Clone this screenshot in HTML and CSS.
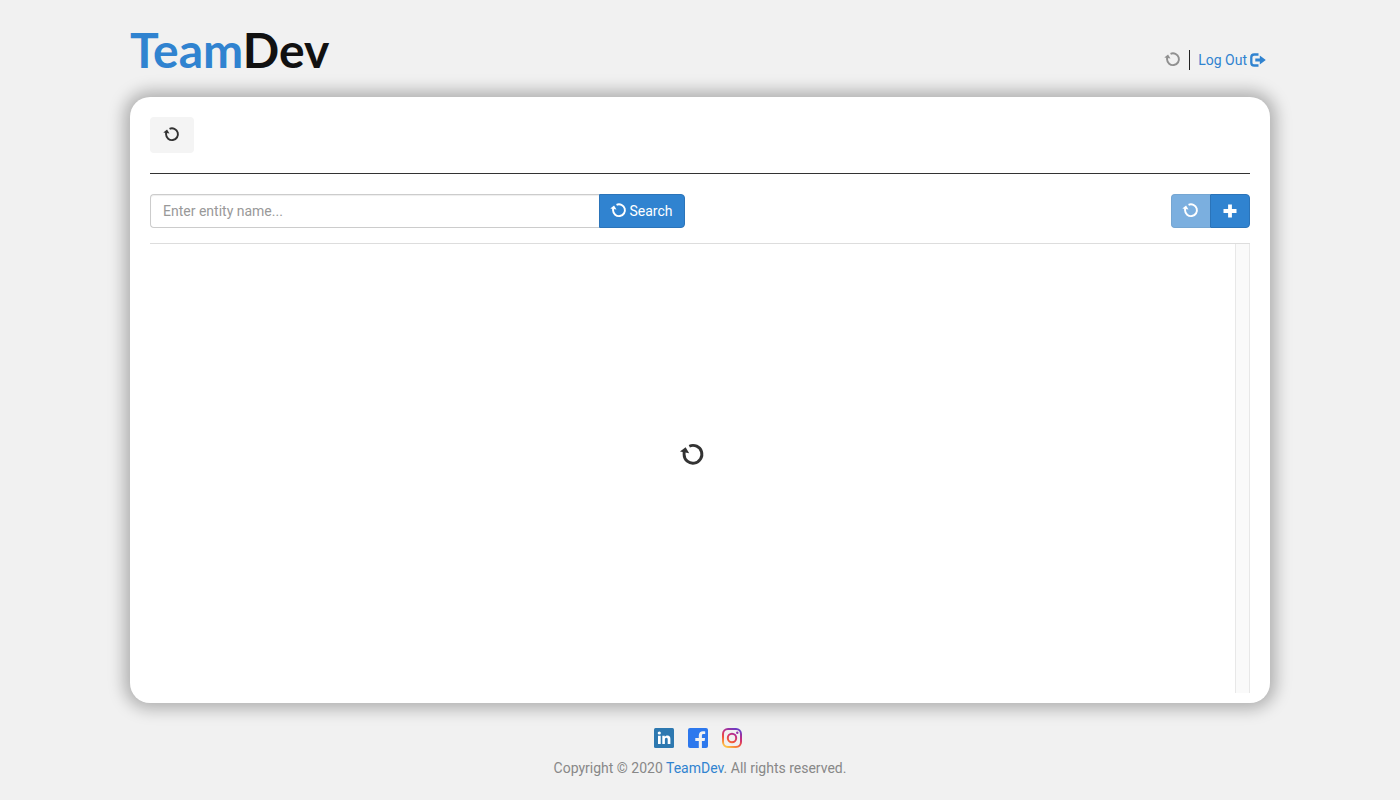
FILE: index.html
```html
<!DOCTYPE html>
<html lang="en">
<head>
<meta charset="utf-8">
<meta name="viewport" content="width=device-width, initial-scale=1">
<title>TeamDev</title>
<link rel="stylesheet" href="styles.css">
</head>
<body>
<svg class="sprite" aria-hidden="true">
  <symbol id="refresh" viewBox="0 0 24 24" overflow="visible">
    <path d="M8.300 4.200A8.900 8.900 0 1 1 3.100 12.400V9.500" fill="none" stroke="currentColor" stroke-width="2.900"/>
    <path d="M-1 9.600 4.600 5.200 8.200 11.200Z" fill="currentColor"/>
  </symbol>
</svg>
<div class="page">
  <header class="header">
    <a class="logo" href="#">Team<span class="logo-dark">Dev</span></a>
    <nav class="account">
      <svg class="icon muted"><use href="#refresh"/></svg>
      <span class="divider"></span>
      <a class="logout" href="#">Log Out
        <svg class="exit" viewBox="0 0 16 14"><path d="M8.500 1.500H4.200Q1.300 1.500 1.300 4.300V9.700Q1.300 12.500 4.200 12.500H8.500" fill="none" stroke="currentColor" stroke-width="2.300"/><path d="M5.300 5.500H9.800V2.400L15.800 7 9.800 11.600V8.500H5.300Z" fill="currentColor"/></svg>
      </a>
    </nav>
  </header>
  <main class="card">
    <div class="tabs">
      <button class="tab" type="button" aria-label="Loading"><svg class="icon"><use href="#refresh"/></svg></button>
    </div>
    <div class="toolbar">
      <form class="search">
        <input class="search-input" type="text" placeholder="Enter entity name..." aria-label="Entity name">
        <button class="button search-button" type="button"><svg class="icon"><use href="#refresh"/></svg>Search</button>
      </form>
      <div class="actions">
        <button class="button action-refresh" type="button" aria-label="Refresh" disabled><svg class="icon"><use href="#refresh"/></svg></button>
        <button class="button action-add" type="button" aria-label="Add"><svg class="plus" viewBox="0 0 14 14"><path d="M7 .5V13.5M.5 7H13.5" stroke="currentColor" stroke-width="3.800"/></svg></button>
      </div>
    </div>
    <div class="list">
      <div class="loading"><svg class="icon-large"><use href="#refresh"/></svg></div>
      <div class="track"></div>
    </div>
  </main>
  <footer class="footer">
    <div class="social">
      <a href="#" aria-label="LinkedIn"><svg viewBox="0 0 20 20"><rect width="20" height="20" rx="1.5" fill="#2d78b0"/><circle cx="5.3" cy="5" r="1.6" fill="#fff"/><path d="M4 7.7h2.7V16H4zM8.3 7.7h2.5v1.2c.5-.8 1.4-1.4 2.6-1.4 2.2 0 3 1.4 3 3.6V16h-2.700v-4.300c0-1.200-.3-2-1.300-2-1.100 0-1.500.8-1.500 2V16H8.300z" fill="#fff"/></svg></a>
      <a href="#" aria-label="Facebook"><svg viewBox="0 0 20 20"><rect width="20" height="20" rx="2" fill="#2d78ed"/><path d="M10.800 20v-7H7.300v-3h3.500V7.600c0-2.900 1.700-4.300 4.200-4.300 1 0 1.700.1 2.200.2v2.600h-1.700c-1.300 0-1.600.7-1.600 1.700V10h3.200l-.5 3h-2.700v7z" fill="#f1f1f1"/></svg></a>
      <a href="#" aria-label="Instagram"><svg viewBox="0 0 20 20"><defs><linearGradient id="insta" x1=".25" y1="1" x2=".75" y2="0"><stop offset="0" stop-color="#fdbf45"/><stop offset=".35" stop-color="#f0523b"/><stop offset=".65" stop-color="#c42d83"/><stop offset="1" stop-color="#6b3bc4"/></linearGradient></defs><path fill="none" stroke="url(#insta)" stroke-width="2" d="M6 1h8a5 5 0 0 1 5 5v8a5 5 0 0 1-5 5H6a5 5 0 0 1-5-5V6a5 5 0 0 1 5-5zM10 5.800a4.200 4.200 0 1 1 0 8.400 4.200 4.200 0 0 1 0-8.400z"/><circle cx="15.300" cy="4.700" r="1.200" fill="#9735a8"/></svg></a>
    </div>
    <p class="copyright">Copyright © 2020 <a href="#">TeamDev</a>. All rights reserved.</p>
  </footer>
</div>
</body>
</html>
```
FILE: styles.css
```css
* { box-sizing: border-box; }
body {
  margin: 0;
  background: #f1f1f1;
  color: #333;
  font: 14px/20px Roboto, "Liberation Sans", sans-serif;
}
a { color: #3083d0; text-decoration: none; }
button, input { font: inherit; margin: 0; }
svg { display: block; flex: none; }
.sprite { position: absolute; width: 0; height: 0; }
.page {
  display: flex;
  flex-direction: column;
  min-height: 100vh;
  max-width: 1140px;
  margin: 0 auto;
}
.header {
  display: flex;
  justify-content: space-between;
  height: 97px;
  padding-right: 4px;
}
.logo {
  padding-top: 20px;
  font: 700 48px/60px Lato, "Open Sans", sans-serif;
}
.logo-dark { color: #111; }
.account {
  display: flex;
  align-items: center;
  height: 20px;
  margin-top: 50px;
}
.icon { width: 16px; height: 16px; margin-bottom: 2px; overflow: visible; }
.muted { color: #909090; }
.divider { width: 1px; height: 20px; margin: 0 8px; background: #222; }
.logout { display: flex; align-items: center; gap: 3px; }
.exit { width: 16px; height: 14px; }
.card {
  display: flex;
  flex: 1;
  flex-direction: column;
  padding: 20px 20px 10px;
  border-radius: 20px;
  background: #fff;
  box-shadow: 0 0 16px 6px rgba(0, 0, 0, .27);
}
.tabs { padding-bottom: 20px; border-bottom: 1px solid #333; }
.tab {
  display: grid;
  place-items: center;
  width: 44px;
  height: 36px;
  padding: 0;
  border: 0;
  border-radius: 4px;
  background: #f4f4f4;
  color: #333;
}
.toolbar {
  display: flex;
  justify-content: space-between;
  padding: 20px 0 15px;
}
.search { display: flex; width: 535px; }
.search-input {
  flex: 1;
  min-width: 0;
  height: 34px;
  padding: 6px 12px;
  border: 1px solid #ccc;
  border-right: 0;
  border-radius: 4px 0 0 4px;
  background: #fff;
  box-shadow: inset 0 1px 1px rgba(0, 0, 0, .07);
}
.search-input::placeholder { color: #999; opacity: 1; }
.button {
  display: flex;
  align-items: center;
  justify-content: center;
  gap: 2px;
  height: 34px;
  padding: 0;
  border: 1px solid #2b74b9;
  background: #3083d0;
  color: #fff;
}
.search-button { width: 86px; border-radius: 0 4px 4px 0; }
.actions { display: flex; }
.action-refresh {
  width: 39px;
  border-color: #75a6d2;
  border-right: 0;
  border-radius: 4px 0 0 4px;
  background: #7bafdf;
}
.action-add { width: 40px; border-radius: 0 4px 4px 0; }
.plus { width: 14px; height: 14px; }
.list { display: flex; flex: 1; border-top: 1px solid #ddd; }
.loading { flex: 1; padding-top: 198px; }
.icon-large { width: 24px; height: 24px; margin: 0 auto; overflow: visible; }
.track {
  width: 15px;
  border: solid #e8e8e8;
  border-width: 0 1px;
  background: #fafafa;
}
.footer { height: 97px; padding-top: 25px; text-align: center; }
.social { display: flex; justify-content: center; gap: 14px; padding-right: 5px; }
.social svg { width: 20px; height: 20px; }
.copyright { margin: 10px 0 0; color: #888; }
```
